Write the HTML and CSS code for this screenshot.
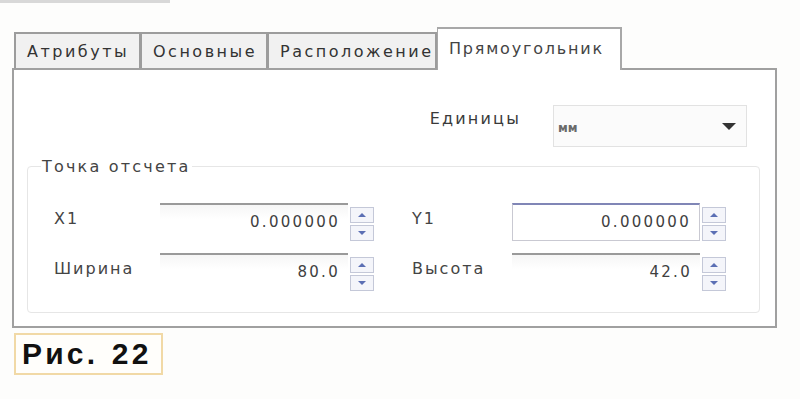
FILE: index.html
```html
<!DOCTYPE html>
<html lang="ru">
<head>
  <meta charset="UTF-8">
  <title>Прямоугольник</title>
  <link rel="stylesheet" href="styles.css">
</head>
<body>
  <div class="topbar"></div>

  <!-- Окно свойств -->
  <div class="dialog">
    <div class="tabs">
      <div class="tab tab-attr">Атрибуты</div>
      <div class="tab tab-main">Основные</div>
      <div class="tab tab-pos">Расположение</div>
      <div class="tab tab-rect active">Прямоугольник</div>
    </div>

    <div class="panel">
      <div class="units-row">
        <span class="units-label">Единицы</span>
        <div class="select">
          <span class="select-value">мм</span>
          <span class="select-arrow"></span>
        </div>
      </div>

      <fieldset class="group">
        <legend>Точка отсчета</legend>
        <div class="fields">
          <span class="field-label">X1</span>
          <div class="spinbox">
            <div class="spin-input">0.000000</div>
            <div class="spin-btns"><span class="up"></span><span class="down"></span></div>
          </div>
          <span class="field-label">Y1</span>
          <div class="spinbox">
            <div class="spin-input focused">0.000000</div>
            <div class="spin-btns"><span class="up"></span><span class="down"></span></div>
          </div>

          <span class="field-label">Ширина</span>
          <div class="spinbox">
            <div class="spin-input">80.0</div>
            <div class="spin-btns"><span class="up"></span><span class="down"></span></div>
          </div>
          <span class="field-label">Высота</span>
          <div class="spinbox">
            <div class="spin-input">42.0</div>
            <div class="spin-btns"><span class="up"></span><span class="down"></span></div>
          </div>
        </div>
      </fieldset>
    </div>
  </div>

  <div class="caption">Рис. 22</div>
</body>
</html>
```

FILE: styles.css
```css
/* === БАЗА === */
* {
  margin: 0;
  padding: 0;
  box-sizing: border-box;
}
body {
  font-family: 'DejaVu Sans', sans-serif;
  background: #fdfdfc;
  color: #3a3a3a;
  width: 800px;
  height: 399px;
  overflow: hidden;
}
.topbar {
  width: 170px;
  height: 3px;
  background: #d8d8d8;
}

/* === ВКЛАДКИ === */
.dialog {
  margin: 24px 0 0 12px;
  width: 765px;
}
.tabs {
  display: flex;
  align-items: flex-end;
  padding-left: 2px;
  height: 41px;
}
.tab {
  height: 36px;
  border: 2px solid #9c9c9c;
  border-bottom: none;
  border-left-width: 1px;
  background: #f1f1f1;
  font-size: 16px;
  letter-spacing: 2.5px;
  color: #333;
  display: flex;
  align-items: center;
  padding-left: 11px;
  padding-top: 1px;
}
.tab:first-child {
  border-left-width: 2px;
}
.tab-attr { width: 127px; }
.tab-main { width: 127px; }
.tab-pos  { width: 169px; }
.tab-rect { width: 185px; }
.tab.active {
  height: 43px;
  margin-bottom: -2px;
  background: #fff;
  border-color: #a8a8a8;
  position: relative;
  z-index: 1;
  padding-bottom: 4px;
  letter-spacing: 1.8px;
  color: #444;
}

/* === ПАНЕЛЬ === */
.panel {
  height: 260px;
  border: 2px solid #a0a0a0;
  background: #fff;
  padding: 35px 28px 0 13px;
}
.units-row {
  display: flex;
  justify-content: flex-end;
  align-items: center;
  gap: 32px;
}
.units-label {
  font-size: 16px;
  letter-spacing: 2.2px;
  margin-top: -16px;
}
.select {
  width: 194px;
  height: 42px;
  border: 1px solid #e2e2e2;
  background: #fbfbfb;
  display: flex;
  align-items: center;
  justify-content: space-between;
  padding: 4px 10px 0 4px;
}
.select-value {
  font-size: 12px;
  color: #6a6a6a;
  font-weight: bold;
}
.select-arrow {
  width: 0;
  height: 0;
  border-left: 7px solid transparent;
  border-right: 7px solid transparent;
  border-top: 7px solid #333;
  margin-bottom: 4px;
}

/* === ГРУППА === */
.group {
  margin-top: 10px;
  width: 733px;
  height: 156px;
  border: 1px solid #e6e6e6;
  border-radius: 4px;
  padding: 0 0 0 26px;
}
.group legend {
  font-size: 16px;
  letter-spacing: 2.2px;
  padding: 0 1px;
  margin-left: -13px;
  margin-top: 2px;
  color: #444;
}
.fields {
  display: grid;
  grid-template-columns: 106px 214px 138px 216px;
  row-gap: 12px;
  margin-top: 27px;
  align-items: center;
}
.fields .field-label {
  font-size: 16px;
  letter-spacing: 2px;
  color: #444;
  margin-top: -8px;
}
.fields .field-label:nth-child(4n+3) {
  margin-left: 38px;
  white-space: nowrap;
}

/* === СПИН-БОКС === */
.spinbox {
  display: flex;
  height: 38px;
  gap: 2px;
}
.spin-input {
  width: 188px;
  height: 38px;
  border-top: 2px solid #9a9a9a;
  background: linear-gradient(#f6f6f6, #fff 40%);
  font-size: 15px;
  letter-spacing: 2.3px;
  color: #404040;
  text-align: right;
  padding: 8px 8px 0 0;
}
.spin-input.focused {
  border: 1px solid #c9c9d2;
  border-top: 2px solid #8086b6;
  background: #fff;
}
.spin-btns {
  width: 24px;
  display: flex;
  flex-direction: column;
  gap: 2px;
  padding-top: 4px;
}
.spin-btns span {
  flex: 1;
  border: 1px solid #c4c8d8;
  background: #f4f5fa;
  display: flex;
  align-items: center;
  justify-content: center;
}
.spin-btns span::after {
  content: "";
  width: 0;
  height: 0;
  border-left: 4px solid transparent;
  border-right: 4px solid transparent;
}
.spin-btns .up::after {
  border-bottom: 4px solid #5b6fb4;
}
.spin-btns .down::after {
  border-top: 4px solid #5b6fb4;
}

/* === ПОДПИСЬ === */
.caption {
  margin: 5px 0 0 14px;
  width: 149px;
  height: 42px;
  border: 2px solid #f1d9a6;
  background: #fffefb;
  font-family: 'Liberation Sans', Arial, sans-serif;
  font-weight: bold;
  font-size: 30px;
  letter-spacing: 3.2px;
  word-spacing: 2px;
  color: #111;
  padding-left: 6px;
  line-height: 38px;
}
```
